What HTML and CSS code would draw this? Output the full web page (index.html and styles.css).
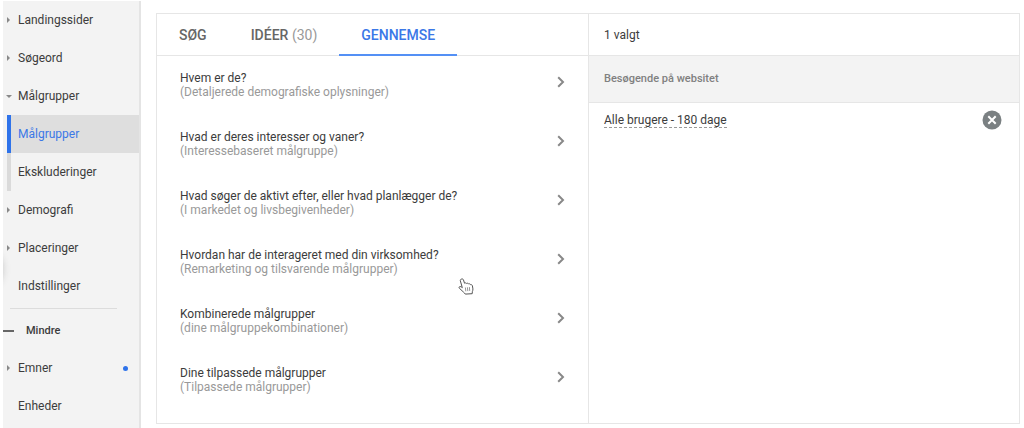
FILE: index.html
```html
<!DOCTYPE html>
<html lang="da">
<head>
<meta charset="utf-8">
<meta name="viewport" content="width=device-width, initial-scale=1">
<title>Målgrupper</title>
<link rel="stylesheet" href="styles.css">
</head>
<body>
<div class="app">
  <nav class="sidebar" aria-label="Navigation">
    <span class="edge-shadow" aria-hidden="true"></span>
    <a class="nav-item closed" href="#">Landingssider</a>
    <a class="nav-item closed" href="#">Søgeord</a>
    <a class="nav-item opened" href="#">Målgrupper</a>
    <div class="nav-group">
      <a class="nav-item child current" href="#" aria-current="page">Målgrupper</a>
      <a class="nav-item child" href="#">Ekskluderinger</a>
    </div>
    <a class="nav-item closed" href="#">Demografi</a>
    <a class="nav-item closed" href="#">Placeringer</a>
    <a class="nav-item" href="#">Indstillinger</a>
    <hr class="nav-divider">
    <button class="nav-toggle" type="button"><span class="minus" aria-hidden="true"></span>Mindre</button>
    <a class="nav-item closed" href="#">Emner<span class="dot" aria-hidden="true"></span></a>
    <a class="nav-item" href="#">Enheder</a>
  </nav>

  <main class="content">
    <div class="picker">
      <section class="browse">
        <div class="tabs" role="tablist">
          <button class="tab" type="button" role="tab">SØG</button>
          <button class="tab" type="button" role="tab">IDÉER <span class="count">(30)</span></button>
          <button class="tab active" type="button" role="tab" aria-selected="true">GENNEMSE</button>
        </div>
        <div class="options">
          <button class="option" type="button"><span class="labels"><span class="title">Hvem er de?</span><span class="note">(Detaljerede demografiske oplysninger)</span></span><svg class="chevron" viewBox="0 0 8 12" aria-hidden="true"><path d="M1.2 1.2 6 6 1.2 10.8"/></svg></button>
          <button class="option" type="button"><span class="labels"><span class="title">Hvad er deres interesser og vaner?</span><span class="note">(Interessebaseret målgruppe)</span></span><svg class="chevron" viewBox="0 0 8 12" aria-hidden="true"><path d="M1.2 1.2 6 6 1.2 10.8"/></svg></button>
          <button class="option" type="button"><span class="labels"><span class="title">Hvad søger de aktivt efter, eller hvad planlægger de?</span><span class="note">(I markedet og livsbegivenheder)</span></span><svg class="chevron" viewBox="0 0 8 12" aria-hidden="true"><path d="M1.2 1.2 6 6 1.2 10.8"/></svg></button>
          <button class="option" type="button"><span class="labels"><span class="title">Hvordan har de interageret med din virksomhed?</span><span class="note">(Remarketing og tilsvarende målgrupper)</span></span><svg class="chevron" viewBox="0 0 8 12" aria-hidden="true"><path d="M1.2 1.2 6 6 1.2 10.8"/></svg></button>
          <button class="option" type="button"><span class="labels"><span class="title">Kombinerede målgrupper</span><span class="note">(dine målgruppekombinationer)</span></span><svg class="chevron" viewBox="0 0 8 12" aria-hidden="true"><path d="M1.2 1.2 6 6 1.2 10.8"/></svg></button>
          <button class="option" type="button"><span class="labels"><span class="title">Dine tilpassede målgrupper</span><span class="note">(Tilpassede målgrupper)</span></span><svg class="chevron" viewBox="0 0 8 12" aria-hidden="true"><path d="M1.2 1.2 6 6 1.2 10.8"/></svg></button>
          <svg class="pointer" viewBox="0 0 16 17" aria-hidden="true"><path d="M3.2 1.2C4.2.6 5.2 1 5.5 2l1 3.2c.7-.5 1.6-.4 2.1.3.7-.5 1.6-.3 2 .4.8-.3 1.7 0 2 .8.8-.2 1.6.2 1.8 1l.5 3.2c.1 1.200-.2 1.700-.5 2.500l-.2 2.300-6.900.4c-.5-1-1.200-1.400-2-2.200L1.300 10.200C.700 9.300 1.300 8.400 2.200 8.500c.8.100 1.400.7 2.100 1.200L2.400 3c-.3-.8 0-1.500.8-1.800z"/><path class="folds" d="M7.400 9.500l.4 3.800M9.400 9.300l.4 3.800M11.400 9.100l.3 3.800"/></svg>
        </div>
      </section>
      <section class="selection">
        <h2 class="selected-count">1 valgt</h2>
        <h3 class="group-name">Besøgende på websitet</h3>
        <div class="chosen">
          <a class="chosen-name" href="#">Alle brugere - 180 dage</a>
          <button class="remove" type="button" aria-label="Fjern"><svg viewBox="0 0 20 20" aria-hidden="true"><circle cx="10" cy="10" r="9.500"/><path d="M6.300 6.300l7.400 7.400M13.700 6.300l-7.400 7.400"/></svg></button>
        </div>
      </section>
    </div>
  </main>
</div>
</body>
</html>
```
FILE: styles.css
```css
* {
  box-sizing: border-box;
}

body {
  margin: 0;
  background: #fff;
  color: #3c3c3c;
  font: 12px/14px Roboto, "Liberation Sans", sans-serif;
}

button {
  margin: 0;
  padding: 0;
  border: 0;
  background: none;
  color: inherit;
  font: inherit;
  text-align: left;
  cursor: pointer;
}

a {
  color: inherit;
  text-decoration: none;
}

.app {
  display: flex;
  min-height: 100vh;
  padding: 1px 4px 0 3px;
}

.sidebar {
  position: relative;
  flex: 0 0 138px;
  border-right: 2px solid #e4e4e4;
  background: #f3f3f3;
  overflow: hidden;
}

.edge-shadow {
  position: absolute;
  top: 254px;
  left: -20px;
  width: 18px;
  height: 28px;
  border-radius: 50%;
  box-shadow: 0 0 8px 1px #bbb;
}

.nav-item {
  position: relative;
  display: flex;
  align-items: center;
  height: 38px;
  padding-left: 15px;
}

.closed::before,
.opened::before {
  content: "";
  position: absolute;
  left: 4px;
  border: 3px solid transparent;
}

.closed::before {
  border-left-color: #888;
  border-right-width: 0;
}

.opened::before {
  left: 3px;
  border-top-color: #888;
  border-bottom-width: 0;
}

.nav-group {
  padding-left: 4px;
}

.child {
  padding-left: 7px;
  border-left: 4px solid #dadada;
}

.current {
  border-left-color: #2f73ea;
  background: #dedede;
  color: #3b78e7;
}

.nav-divider {
  height: 1px;
  margin: 3px 22px 4px 7px;
  border: 0;
  background: #dcdcdc;
}

.nav-toggle {
  display: flex;
  align-items: center;
  gap: 12px;
  width: 100%;
  height: 36px;
  font-size: 11px;
  font-weight: 500;
}

.minus {
  width: 11px;
  height: 2px;
  background: #666;
}

.dot {
  width: 5px;
  height: 5px;
  margin: 0 11px 0 auto;
  border-radius: 50%;
  background: #2f73ea;
}

.content {
  flex: 1;
  min-width: 0;
  padding: 12px 0 4px 15px;
}

.picker {
  display: grid;
  grid-template-columns: 1fr 1fr;
  border: 1px solid #e6e6e6;
}

.tabs {
  display: flex;
  height: 42px;
  border-bottom: 1px solid #e6e6e6;
}

.tab {
  height: 42px;
  padding: 2px 22px 0;
  border-bottom: 2px solid transparent;
  color: #666;
  font-size: 14px;
  font-weight: 500;
}

.count {
  color: #999;
  font-weight: 400;
}

.active {
  border-bottom-color: #5490f5;
  color: #3b78e7;
}

.options {
  position: relative;
  padding-bottom: 13px;
}

.option {
  display: flex;
  align-items: center;
  justify-content: space-between;
  width: 100%;
  height: 59px;
  padding: 0 23px 8px;
}

.labels {
  display: grid;
  padding-top: 6px;
}

.note {
  color: #999;
}

.chevron {
  width: 8px;
  height: 12px;
  fill: none;
  stroke: #888;
  stroke-width: 2;
}

.pointer {
  position: absolute;
  top: 222px;
  left: 301px;
  width: 16px;
  height: 17px;
  fill: #fff;
  stroke: #555;
  stroke-width: 1;
}

.folds {
  stroke: #999;
}

.selection {
  border-left: 1px solid #e6e6e6;
}

.selected-count,
.group-name {
  display: flex;
  align-items: center;
  margin: 0;
  padding: 0 15px;
  border-bottom: 1px solid #e6e6e6;
}

.selected-count {
  height: 42px;
  font-size: 12px;
  font-weight: 400;
}

.group-name {
  height: 47px;
  background: #f3f3f3;
  color: #808080;
  font-size: 11px;
  font-weight: 500;
}

.chosen {
  display: flex;
  align-items: center;
  justify-content: space-between;
  padding: 7px 17px 7px 15px;
}

.chosen-name {
  border-bottom: 1px dashed #999;
}

.remove {
  width: 20px;
  height: 20px;
}

.remove svg {
  display: block;
  width: 20px;
  height: 20px;
  fill: #7a8082;
  stroke: #fff;
  stroke-width: 2;
}

.remove circle {
  stroke: none;
}
```
